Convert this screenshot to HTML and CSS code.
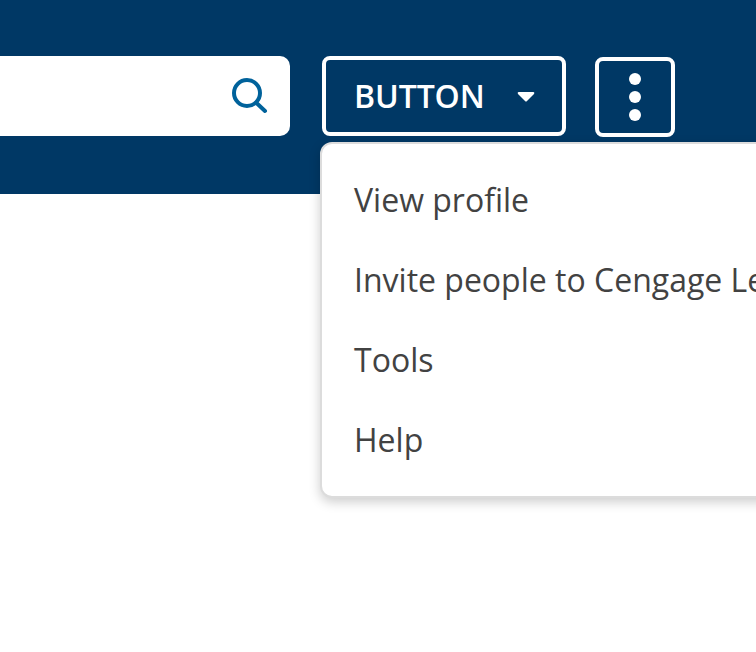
FILE: index.html
```html
<!DOCTYPE html>
<html lang="en">
<head>
<meta charset="utf-8">
<title>Header menu</title>
<link rel="stylesheet" href="styles.css">
</head>
<body>
<header class="bar">
  <div class="search">
    <svg class="search-icon" width="40" height="40" viewBox="0 0 40 40" fill="none" stroke="#00629b" stroke-width="4" stroke-linecap="round"><circle cx="18" cy="17" r="13"/><path d="M27.5 27L36 35"/></svg>
  </div>
  <div class="dropdown">
    <button class="btn"><span class="label">BUTTON</span><svg class="caret" width="18" height="10" viewBox="0 0 18 10"><path d="M1.5 0H16.5Q18 .5 17 2L10 9Q9 10 8 9L1 2Q0 .5 1.5 0Z" fill="#fff"/></svg></button>
    <ul class="menu">
      <li>View profile</li>
      <li>Invite people to Cengage Le</li>
      <li>Tools</li>
      <li>Help</li>
    </ul>
  </div>
  <button class="more" aria-label="More"><svg width="12" height="48" viewBox="0 0 12 48" fill="#fff"><circle cx="6" cy="6" r="6"/><circle cx="6" cy="24" r="6"/><circle cx="6" cy="42" r="6"/></svg></button>
</header>
</body>
</html>
```

FILE: styles.css
```css
* { box-sizing: border-box; }
html { overflow: hidden; }
body { margin: 0; height: 652px; overflow: hidden; background: #fff; font-family: "Open Sans", sans-serif; }
.bar { height: 194px; padding-top: 56px; background: #003865; display: flex; align-items: flex-start; }
.search { width: 290px; height: 80px; background: #fff; border-radius: 0 10px 10px 0; display: flex; align-items: center; justify-content: flex-end; padding-right: 21px; }
.search-icon { display: block; }
.dropdown { position: relative; margin-left: 32px; }
.btn { display: flex; align-items: center; width: 244px; height: 80px; padding: 0 0 0 28px; border: 4px solid #fff; border-radius: 8px; background: #003865; color: #fff; font: 600 32px/44px "Open Sans", sans-serif; letter-spacing: -0.1px; }
.label { width: 131px; text-align: left; white-space: nowrap; }
.caret { margin: 2px 0 0 32px; }
.more { display: flex; align-items: center; justify-content: center; width: 80px; height: 80px; margin: 1px 0 0 29px; padding: 0; border: 4px solid #fff; border-radius: 8px; background: #003865; }
.menu { position: absolute; left: -2px; top: 86px; width: 480px; height: 356px; margin: 0; padding: 16px 0 16px 32px; list-style: none; background: #fff; border: 2px solid #dcdcdc; border-radius: 12px; box-shadow: 0 4px 12px rgba(0,0,0,.2); }
.menu li { height: 80px; line-height: 80px; font-size: 32px; color: #424242; white-space: nowrap; }
```
